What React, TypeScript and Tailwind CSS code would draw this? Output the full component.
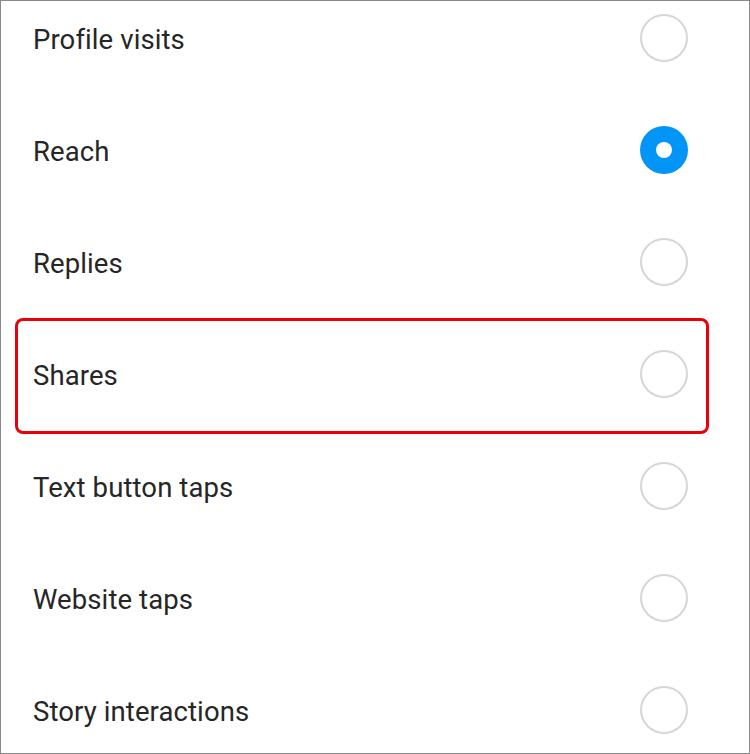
import React from "react";

const items = [
  { label: "Profile visits", selected: false },
  { label: "Reach", selected: true },
  { label: "Replies", selected: false },
  { label: "Shares", selected: false, highlight: true },
  { label: "Text button taps", selected: false },
  { label: "Website taps", selected: false },
  { label: "Story interactions", selected: false },
];

export default function App() {
  return (
    <div
      className="w-[750px] h-[754px] overflow-hidden bg-white border border-[#8a8a8a]"
      style={{ fontFamily: "Roboto, 'Liberation Sans', sans-serif" }}
    >
      <div className="flex flex-col -mt-[19px]">
        {items.map((it) => (
          <div
            key={it.label}
            className="relative h-[112px] shrink-0 flex items-center justify-between pl-[32px] pr-[61px]"
          >
            {it.highlight && (
              <div className="absolute left-[14px] right-[40px] top-0 -bottom-[4px] rounded-[8px] border-[3px] border-[#e8000b]" />
            )}
            <span className="mt-[4px] text-[27.5px] leading-none text-[#262626] tracking-[0.1px]">
              {it.label}
            </span>
            {it.selected ? (
              <div className="w-[48px] h-[48px] rounded-full bg-[#0095f6] flex items-center justify-center">
                <div className="w-[16px] h-[16px] rounded-full bg-white" />
              </div>
            ) : (
              <div className="w-[48px] h-[48px] rounded-full border-2 border-[#d6d6d6]" />
            )}
          </div>
        ))}
      </div>
    </div>
  );
}
